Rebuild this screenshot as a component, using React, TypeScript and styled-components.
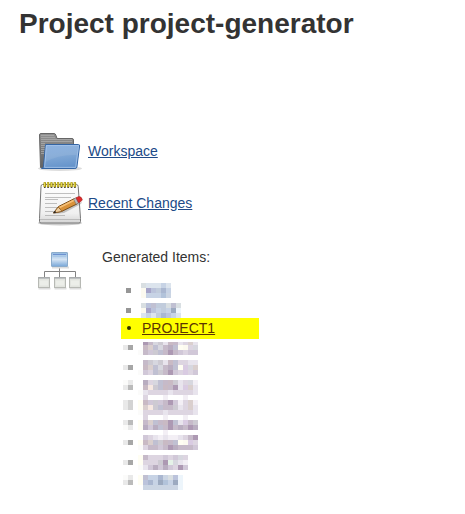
import React from 'react';
import styled, { createGlobalStyle } from 'styled-components';

const GlobalStyle = createGlobalStyle`
  * { box-sizing: border-box; }
  body {
    margin: 0;
    background: #fff;
    color: #333;
    font: 14px/20px "Liberation Sans", Arial, sans-serif;
  }
`;

const Page = styled.main`
  width: 465px;
  height: 514px;
  overflow: hidden;
`;

const Title = styled.h1`
  margin: 0;
  padding: 7px 0 0 19px;
  height: 127px;
  font-size: 28px;
  line-height: 33px;
  font-weight: 700;
  white-space: nowrap;
`;

const LinkRow = styled.div`
  display: flex;
  align-items: center;
  gap: 4px;
  height: 48px;
  margin: 0 0 4px 36px;
`;

const Link = styled.a<{ $visited?: boolean }>`
  color: ${(p) => (p.$visited ? '#5c3500' : '#204a87')};
  text-decoration: underline;
`;

const Icon = styled.svg`
  display: block;
  flex: none;
  width: 48px;
  height: 48px;
`;

const Generated = styled.section`
  display: flex;
  margin: 20px 0 0 36px;
`;

const GeneratedBody = styled.div`
  width: 240px;
`;

const Caption = styled.div`
  height: 36px;
  padding-left: 18px;
`;

const Items = styled.ul`
  list-style: none;
  margin: 0;
  padding: 0 0 0 37px;
`;

const Item = styled.li<{ $gap: number }>`
  display: flex;
  margin: ${(p) => p.$gap}px 0 0 2px;
`;

const Highlighted = styled.li`
  display: flex;
  align-items: center;
  width: 138px;
  height: 21px;
  padding: 0 0 1px 6px;
  gap: 11px;
  background: #ff0;
`;

const Dot = styled.span`
  width: 4px;
  height: 4px;
  border-radius: 50%;
  background: #333300;
`;

const Pixels = styled.svg`
  display: block;
  flex: none;
`;

const palette: Record<string, string> = {
  a: '#fbfbfa', b: '#e9e9e9', c: '#d3d3d3', d: '#bbbbbb', e: '#a7a7a7', f: '#909090',
  g: '#fffef3', h: '#fcfaf0', i: '#f3eff5', j: '#e8e4ed', k: '#ddd5e1', l: '#d1c8d8',
  m: '#c6bac9', n: '#b9adc0', o: '#ad99b3', p: '#c9bac4', q: '#dacfce', r: '#f7e9e2',
  s: '#d9cbe2', t: '#d7d7df', u: '#c0c0d2', v: '#cdcad2', w: '#d9dfe2', x: '#dce4ed',
  y: '#c7d3e5', z: '#b2c3da', A: '#a6a4c8', B: '#c1ccdc', C: '#9caac0', D: '#aab7d0',
  E: '#edf5fb', F: '#e5f2e8', G: '#bbc3db', H: '#cbd5e3',
};

type Mosaic = { rows: string[]; gap: number; first?: number; square?: boolean };

const leading: Mosaic[] = [
  { gap: 0, square: true, rows: ['...wxxxyx', '...hAGBDy', '...hyyyzH'] },
  { gap: 5, square: true, rows: ['...wGuBBwuw', '...hAGyByCE', '...xyxBDGyx'] },
];

const trailing: Mosaic[] = [
  { gap: 3, first: 3, rows: ['....omtvjpmjkqj', 'be..pqutmnughkt', '...amlvumomlkll'] },
  { gap: 5, rows: ['....mvtvjpukkjj', 'be..pqutmnugstq', '...alkuvmolkskl'] },
  { gap: 5, rows: ['ab..nktumpvjkti', 'bd..prvupmojsqj', '...ajkkkkjkkkkj'] },
  { gap: 0, rows: ['....k...i...i..', 'bc.gplvlmolikqi', 'bc.gqrvummvjkqj', '...akkkkjkkkkkj'] },
  { gap: 0, rows: ['....k...i...i..', 'bd.gmqumpoujsmv', 'ab.gnlnumomnmon', '........i......'] },
  { gap: 0, rows: ['....lkjijiijkmo', 'be.gpquvpmughsk', '...akmmlmonmmml'] },
  { gap: 5, rows: ['...gmkkklkltk', 'be.gkkkvoFtji', '...ajlnlnlkol'] },
  { gap: 5, rows: ['ab.guyyDHwGE', 'bd.gGDyCzyCE', '....HHHHHHHE'] },
];

const cell = 5;

function PixelItem({ rows, gap, square, first = cell }: Mosaic) {
  const top = cell - first;
  const inset = square ? 3 : 0;
  const height = rows.length * cell - top;
  const width = Math.max(...rows.map((row) => row.length)) * cell + inset;
  return (
    <Item $gap={gap}>
      <Pixels
        width={width}
        height={height}
        viewBox={`0 ${top} ${width} ${height}`}
        shapeRendering="crispEdges"
        aria-hidden="true"
      >
        {rows.flatMap((row, y) =>
          [...row].map((key, x) =>
            key === '.' ? null : (
              <rect
                key={`${x}-${y}`}
                x={x * cell + inset}
                y={y * cell}
                width={cell}
                height={cell}
                fill={palette[key]}
              />
            ),
          ),
        )}
        {square && <rect x="3" y="5" width="5" height="5" fill="#969696" />}
      </Pixels>
    </Item>
  );
}

function FolderIcon() {
  return (
    <Icon viewBox="0 0 48 48" aria-hidden="true">
      <defs>
        <linearGradient id="folderBack" x2="0" y2="1">
          <stop stopColor="#929292" />
          <stop offset="1" stopColor="#626262" />
        </linearGradient>
        <linearGradient id="folderFront" x2="0.2" y2="1">
          <stop stopColor="#85ade0" />
          <stop offset="0.5" stopColor="#82a9d6" />
          <stop offset="1" stopColor="#6795cc" />
        </linearGradient>
      </defs>
      <ellipse cx="24" cy="41.5" rx="22" ry="2.5" fill="#ddd" />
      <path d="M4.500 40.500 3.500 8q0-1.500 1.500-1.500h13q1.500 0 2 2l1 3H36q1.500 0 1.500 1.500v27z" fill="url(#folderBack)" stroke="#666" />
      <path d="M5 8.500h13M5 10.500h14M5 12.500h31M5 14.500h31M5 16.500h4M5 18.500h4M5 20.500h4M5 22.500h4M5 24.500h3M5 26.500h3" stroke="#b0b0b0" strokeWidth=".7" />
      <path d="M9.500 17.500h33q1.300 0 1.100 1.500l-2.700 21q-.2 1.500-2 1.500H5.500q2-.5 2-2z" fill="url(#folderFront)" stroke="#3465a4" />
      <path d="M10.300 18.500h32.200L39.700 40.400H8.600z" fill="none" stroke="#a7c5eb" strokeWidth=".8" />
      <path d="M10 19h31.500l-1 9Q24 27 9 35z" fill="#fff" opacity=".08" />
    </Icon>
  );
}

function NotepadIcon() {
  return (
    <Icon viewBox="0 0 48 48" aria-hidden="true">
      <defs>
        <linearGradient id="paper" x2="0" y2="1">
          <stop stopColor="#fff" />
          <stop offset=".75" stopColor="#f0f0f0" />
          <stop offset="1" stopColor="#d4d4d4" />
        </linearGradient>
      </defs>
      <ellipse cx="24" cy="44" rx="22" ry="2.500" fill="#ccc" />
      <path d="M6.500 5.500h34q1.500 0 1.700 2l2.300 32v3q0 1.500-1.500 1.500H5q-1.500 0-1.500-1.500v-3l1.500-32q0-2 1.500-2z" fill="url(#paper)" stroke="#777" />
      <path d="M4 40.500h40" stroke="#bbb" />
      <path d="M9 14.500h30M9 18.500h26M9 20.500h13M9 24.500h12M9 28.500h20M9 32.500h10M9 36.500h20" stroke="#b0b0b0" strokeWidth=".8" />
      {Array.from({ length: 10 }, (_, i) => (
        <g key={i}>
          <rect x={7.5 + i * 3.35} y="3" width="2.500" height="5.500" rx="1" fill="#a08c08" />
          <path d={`M${8.6 + i * 3.35} 3.500v4`} stroke="#eee45b" />
          <path d={`M${8 + i * 3.35} 8.500h1.500`} stroke="#444" />
        </g>
      ))}
      <path d="m18 35 10-1 17-9 1-2-3 1-15 6z" fill="#777" opacity=".4" />
      <path d="m17.500 34 5-6.500 16-8 2.800 5.300-15.800 7.700z" fill="#d9923a" stroke="#70440f" strokeWidth=".9" />
      <path d="m23.500 28.500 15-7.500" stroke="#f5c078" strokeWidth="1.800" />
      <path d="m17.700 34 4.500-6 3.800 4.300z" fill="#efcfa0" stroke="#80501c" strokeWidth=".7" />
      <path d="m17.200 34.200 1.700-2.500 1.500 1.800z" fill="#222" />
      <path d="m37.500 20 2.500-1.200 2.600 5.200-2.500 1.200z" fill="#bbb" stroke="#666" strokeWidth=".5" />
      <path d="m40 18.700 3-1.200q2.800.3 3.300 3.300-.4 1.500-3.700 3z" fill="#df2a2a" stroke="#a32020" strokeWidth=".6" />
    </Icon>
  );
}

function HierarchyIcon() {
  return (
    <Icon viewBox="0 0 48 48" aria-hidden="true">
      <defs>
        <linearGradient id="node" x2="0" y2="1">
          <stop stopColor="#8fb8e0" />
          <stop offset=".5" stopColor="#d5e4f3" />
          <stop offset="1" stopColor="#76a6d8" />
        </linearGradient>
      </defs>
      <path d="M23.500 20v10M8.500 31v-6.500h31V31" fill="none" stroke="#838383" />
      <path d="M16 20.500h17" stroke="#ddd" strokeWidth="2" />
      <rect x="15.500" y="5.500" width="16" height="14" rx=".5" fill="url(#node)" stroke="#8caccb" />
      <path d="M17 7.500h13" stroke="#6d91d0" />
      <path d="M17 9.500h13" stroke="#a8c7e6" />
      {[2.5, 18.5, 33.5].map((x) => (
        <g key={x}>
          <path d={`M${x} 41.500h12`} stroke="#ddd" strokeWidth="2" />
          <rect x={x} y="30.500" width="11" height="10" fill="#e2e4df" stroke="#b7b9b4" />
          <path d={`M${x} 31h11`} stroke="#999da5" />
          <path d={`M${x + 1.5} 33.500h8v5h-8z`} fill="#eceee9" />
        </g>
      ))}
    </Icon>
  );
}

export default function App() {
  return (
    <Page>
      <GlobalStyle />
      <Title>Project project-generator</Title>
      <LinkRow>
        <FolderIcon />
        <Link href="#">Workspace</Link>
      </LinkRow>
      <LinkRow>
        <NotepadIcon />
        <Link href="#">Recent Changes</Link>
      </LinkRow>
      <Generated>
        <HierarchyIcon />
        <GeneratedBody>
          <Caption>Generated Items:</Caption>
          <Items>
            {leading.map((item, i) => <PixelItem key={i} {...item} />)}
            <Highlighted>
              <Dot />
              <Link href="#" $visited>PROJECT1</Link>
            </Highlighted>
            {trailing.map((item, i) => <PixelItem key={i} {...item} />)}
          </Items>
        </GeneratedBody>
      </Generated>
    </Page>
  );
}
